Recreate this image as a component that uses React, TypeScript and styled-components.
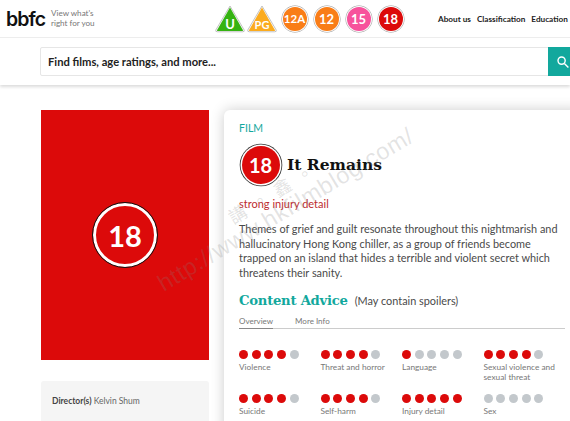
import styled, { createGlobalStyle } from "styled-components";

const teal = "#12a89d";
const red = "#dc0a0a";

const GlobalStyle = createGlobalStyle`
  html, body {
    margin: 0;
    padding: 0;
    background: #fff;
  }
  body {
    font-family: "Lato", "Liberation Sans", sans-serif;
  }
`;

const ratings = [
  { label: "Violence", level: 4 },
  { label: "Threat and horror", level: 4 },
  { label: "Language", level: 1 },
  { label: "Sexual violence and sexual threat", level: 4 },
  { label: "Suicide", level: 4 },
  { label: "Self-harm", level: 4 },
  { label: "Injury detail", level: 5 },
  { label: "Sex", level: 0 },
];

function Triangle({ color, text, size }: { color: string; text: string; size: number }) {
  return (
    <svg width="30" height="28" viewBox="0 0 30 28">
      <path
        d="M15 1 L29.2 25 Q29.8 26.8 27.6 26.8 L2.4 26.8 Q0.2 26.8 0.8 25 Z"
        fill="#fff"
        stroke="#a9a9a9"
        strokeWidth="0.7"
        strokeLinejoin="round"
      />
      <path
        d="M15 2.6 L28 25.2 Q28.2 25.9 27.4 25.9 L2.6 25.9 Q1.8 25.9 2 25.2 Z"
        fill={color}
        strokeLinejoin="round"
      />
      <text
        x="15"
        y="23.6"
        textAnchor="middle"
        fill="#fff"
        fontSize={size}
        fontWeight="700"
        fontFamily="Lato, sans-serif"
      >
        {text}
      </text>
    </svg>
  );
}

function App() {
  return (
    <Page>
      <GlobalStyle />
      <Header>
        <Logo>bbfc</Logo>
        <Tagline>
          View what's
          <br />
          right for you
        </Tagline>
        <Badges>
          <Triangle color="#35b312" text="U" size={13} />
          <Triangle color="#fbab1e" text="PG" size={11} />
          <Circle $color="#f97d17" $wide>12A</Circle>
          <Circle $color="#f97d17">12</Circle>
          <Circle $color="#f7529c">15</Circle>
          <Circle $color={red}>18</Circle>
        </Badges>
        <Nav>
          <span>About us</span>
          <span>Classification</span>
          <span>Education</span>
        </Nav>
      </Header>
      <SearchBar>
        <SearchBox>
          <SearchText>Find films, age ratings, and more...</SearchText>
          <SearchButton>
            <svg width="12" height="12" viewBox="0 0 12 12" fill="none" stroke="#fff" strokeWidth="1.4">
              <circle cx="4.6" cy="4.6" r="3.6" />
              <path d="M7.4 7.4 L11.4 11.4" />
            </svg>
          </SearchButton>
        </SearchBox>
      </SearchBar>
      <Main>
        <LeftColumn>
          <Poster>
            <PosterBadge>18</PosterBadge>
          </Poster>
          <InfoCard>
            <strong>Director(s)</strong> Kelvin Shum
          </InfoCard>
        </LeftColumn>
        <Card>
          <Kind>FILM</Kind>
          <TitleRow>
            <TitleBadge>18</TitleBadge>
            <Title>It Remains</Title>
          </TitleRow>
          <Issue>strong injury detail</Issue>
          <Summary>
            Themes of grief and guilt resonate throughout this nightmarish and hallucinatory Hong Kong
            chiller, as a group of friends become trapped on an island that hides a terrible and violent
            secret which threatens their sanity.
          </Summary>
          <AdviceHead>
            <AdviceTitle>Content Advice</AdviceTitle>
            <Spoilers>(May contain spoilers)</Spoilers>
          </AdviceHead>
          <Tabs>
            <Tab $active>Overview</Tab>
            <Tab>More Info</Tab>
          </Tabs>
          <RatingGrid>
            {ratings.map((r) => (
              <Rating key={r.label}>
                <Dots>
                  {[0, 1, 2, 3, 4].map((i) => (
                    <Dot key={i} $on={i < r.level} />
                  ))}
                </Dots>
                <RatingLabel>{r.label}</RatingLabel>
              </Rating>
            ))}
          </RatingGrid>
        </Card>
      </Main>
      <Watermark>http://www.hkfilmblog.com/</Watermark>
      <WatermarkCjk>講。鑫。</WatermarkCjk>
    </Page>
  );
}

export default App;

const Page = styled.div`
  position: relative;
  width: 570px;
  height: 421px;
  overflow: hidden;
  background: #fff;
`;

const Header = styled.header`
  display: flex;
  align-items: center;
  height: 37px;
  padding-left: 6px;
  border-bottom: 1px solid #eee;
`;

const Logo = styled.div`
  width: 45px;
  font-family: "Inter", sans-serif;
  font-size: 19.5px;
  font-weight: 600;
  letter-spacing: -0.9px;
  color: #111;
`;

const Tagline = styled.div`
  width: 164px;
  font-size: 8.1px;
  line-height: 9.5px;
  color: #777;
`;

const Badges = styled.div`
  display: flex;
  align-items: center;
  width: 223px;
  gap: 2px;
`;

const Circle = styled.div<{ $color: string; $wide?: boolean }>`
  display: flex;
  align-items: center;
  justify-content: center;
  width: 24px;
  height: 24px;
  margin: ${(p) => (p.$wide ? "0 0 0 3.5px" : "0 0 0 6px")};
  border-radius: 50%;
  background: ${(p) => p.$color};
  box-shadow: 0 0 0 1px #fff, 0 0 0 1.5px #999;
  color: #fff;
  font-size: ${(p) => (p.$wide ? "11.5px" : "13px")};
  font-weight: 700;
`;

const Nav = styled.nav`
  display: flex;
  gap: 6px;
  font-size: 8.2px;
  font-weight: 700;
  color: #222;
  white-space: nowrap;
`;

const SearchBar = styled.div`
  height: 47px;
  padding: 9px 0 0 40px;
  box-sizing: border-box;
  box-shadow: 0 2px 3px rgba(0, 0, 0, 0.14);
`;

const SearchBox = styled.div`
  display: flex;
  align-items: center;
  justify-content: space-between;
  width: 538px;
  height: 29px;
  box-sizing: border-box;
  border: 1px solid #e6e6e6;
  border-radius: 2px 0 0 2px;
`;

const SearchText = styled.div`
  padding-left: 7px;
  font-size: 11.2px;
  font-weight: 700;
  color: #222;
`;

const SearchButton = styled.div`
  display: flex;
  align-items: center;
  justify-content: center;
  width: 30px;
  height: 29px;
  margin-right: -1px;
  background: ${teal};
`;

const Main = styled.main`
  display: flex;
  gap: 15px;
  padding: 25px 0 0 41px;
`;

const LeftColumn = styled.div`
  width: 168px;
  flex-shrink: 0;
`;

const Poster = styled.div`
  display: flex;
  align-items: center;
  justify-content: center;
  height: 250px;
  background: ${red};
`;

const PosterBadge = styled.div`
  display: flex;
  align-items: center;
  justify-content: center;
  width: 58px;
  height: 58px;
  border: 3px solid #fff;
  outline: 1px solid #111;
  border-radius: 50%;
  color: #fff;
  font-size: 29px;
  font-weight: 700;
`;

const InfoCard = styled.div`
  height: 60px;
  margin-top: 21px;
  padding: 15px 11px;
  box-sizing: border-box;
  border-radius: 3px;
  background: #f5f5f5;
  font-size: 8.5px;
  color: #666;

  strong {
    color: #444;
  }
`;

const Card = styled.section`
  flex: 0 0 360px;
  height: 400px;
  padding: 11px 0 0 15px;
  box-sizing: border-box;
  border-radius: 6px 0 0 0;
  background: #fff;
  box-shadow: 0 0 14px rgba(0, 0, 0, 0.2);
`;

const Kind = styled.div`
  font-size: 10.5px;
  line-height: 14px;
  color: ${teal};
`;

const TitleRow = styled.div`
  display: flex;
  align-items: center;
  gap: 5px;
  margin-top: 8px;
`;

const TitleBadge = styled.div`
  display: flex;
  align-items: center;
  justify-content: center;
  width: 38px;
  height: 38px;
  margin: 2.5px;
  border-radius: 50%;
  background: ${red};
  box-shadow: 0 0 0 1.5px #fff, 0 0 0 2.3px #333;
  color: #fff;
  font-size: 20px;
  font-weight: 700;
`;

const Title = styled.h1`
  margin: 0;
  font-family: "DejaVu Serif", serif;
  font-size: 15.5px;
  font-weight: 700;
  color: #111;
`;

const Issue = styled.div`
  margin-top: 11px;
  font-size: 11px;
  line-height: 14px;
  color: #bd2a2e;
`;

const Summary = styled.p`
  width: 322px;
  margin: 11px 0 0;
  font-size: 10.9px;
  line-height: 14.6px;
  color: #4a4a4a;
`;

const AdviceHead = styled.div`
  display: flex;
  align-items: baseline;
  gap: 7px;
  margin-top: 13px;
`;

const AdviceTitle = styled.h2`
  margin: 0;
  font-family: "DejaVu Serif", serif;
  font-size: 13.2px;
  font-weight: 700;
  letter-spacing: -0.25px;
  color: ${teal};
`;

const Spoilers = styled.span`
  font-size: 10.9px;
  color: #4a4a4a;
`;

const Tabs = styled.div`
  display: flex;
  gap: 22px;
  width: 326px;
  margin-top: 8px;
  border-bottom: 1px solid #ccc;
`;

const Tab = styled.div<{ $active?: boolean }>`
  margin-bottom: -1px;
  padding-bottom: 1px;
  border-bottom: 1px solid ${(p) => (p.$active ? "#888" : "transparent")};
  font-size: 8px;
  line-height: 11px;
  color: #777;
`;

const RatingGrid = styled.div`
  display: grid;
  grid-template-columns: repeat(4, 81.5px);
  row-gap: 11.5px;
  margin-top: 21px;
`;

const Rating = styled.div`
  min-width: 0;
`;

const Dots = styled.div`
  display: flex;
  gap: 3.7px;
`;

const Dot = styled.span<{ $on: boolean }>`
  width: 9px;
  height: 9px;
  border-radius: 50%;
  background: ${(p) => (p.$on ? red : "#c3c8cc")};
`;

const RatingLabel = styled.div`
  width: 78px;
  margin-top: 3px;
  font-size: 8.3px;
  line-height: 10px;
  color: #777;
`;

const Watermark = styled.div`
  position: absolute;
  left: 160px;
  top: 272px;
  transform: rotate(-31deg);
  transform-origin: 0 50%;
  font-family: "Liberation Sans", sans-serif;
  font-size: 23.5px;
  letter-spacing: 0.6px;
  color: rgba(130, 130, 130, 0.22);
  white-space: nowrap;
  pointer-events: none;
`;

const WatermarkCjk = styled.div`
  position: absolute;
  left: 222px;
  top: 178px;
  transform: rotate(-31deg);
  font-family: "Noto Sans CJK TC", sans-serif;
  font-size: 18px;
  letter-spacing: 8px;
  color: rgba(130, 130, 130, 0.22);
  white-space: nowrap;
  pointer-events: none;
`;
